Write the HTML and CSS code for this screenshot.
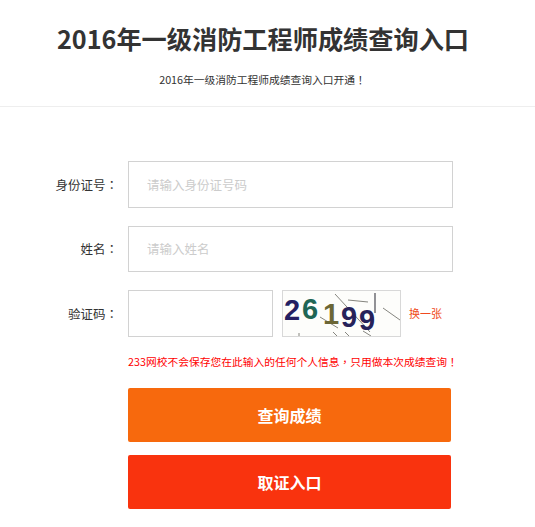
FILE: index.html
```html
<!DOCTYPE html>
<html lang="zh-CN">
<head>
<meta charset="utf-8">
<title>2016年一级消防工程师成绩查询入口</title>
<link rel="stylesheet" href="styles.css">
</head>
<body>
<header class="head">
  <h1 class="title">2016年一级消防工程师成绩查询入口</h1>
  <p class="sub">2016年一级消防工程师成绩查询入口开通<span class="punct" lang="zh-TW">！</span></p>
</header>
<form class="form">
  <div class="row">
    <label class="label">身份证号<span class="punct" lang="zh-TW">：</span></label>
    <input class="field" type="text" placeholder="请输入身份证号码">
  </div>
  <div class="row">
    <label class="label">姓名<span class="punct" lang="zh-TW">：</span></label>
    <input class="field" type="text" placeholder="请输入姓名">
  </div>
  <div class="row">
    <label class="label">验证码<span class="punct" lang="zh-TW">：</span></label>
    <input class="field short" type="text">
    <svg class="captcha" viewBox="0 0 117 45" aria-label="验证码图片">
      <rect width="117" height="45" fill="#fdfdfb"/>
      <g stroke="#85857f" stroke-width="1" fill="none">
        <path d="M52 3 L87 41"/><path d="M65 9 L85 11"/><path d="M100 17 L117 29"/>
        <path d="M37 26 L55 37"/><path d="M80 40 L88 45"/>
        <path d="M16 42 V45"/><path d="M50 41 L54 45"/><path d="M62 41 L66 45"/>
      </g>
      <path class="cline" d="M92 2 V22"/>
      <text class="cd" x="1" y="29" fill="#241f63">2</text>
      <text class="cd" x="19" y="28" fill="#1f6655">6</text>
      <text class="cd" x="40" y="33" fill="#6b6636">1</text>
      <text class="cd" x="58" y="36" fill="#26225a">9</text>
      <text class="cd" x="76" y="39" fill="#26225a">9</text>
    </svg>
    <a class="swap" href="#">换一张</a>
  </div>
  <p class="warn">233网校不会保存您在此输入的任何个人信息<span class="punct" lang="zh-TW">，</span>只用做本次成绩查询<span class="punct" lang="zh-TW">！</span></p>
  <button class="btn orange" type="button">查询成绩</button>
  <button class="btn red" type="button">取证入口</button>
</form>
</body>
</html>
```
FILE: styles.css
```css
* { box-sizing: border-box; }
html, body { margin: 0; padding: 0; background: #fff; }
body {
  font-family: "Noto Sans CJK SC", "Open Sans", sans-serif;
  color: #333;
  overflow: hidden;
}
.punct { font-family: "Noto Sans CJK TC", sans-serif; }
.head {
  height: 107px;
  border-bottom: 1px solid #eee;
  text-align: center;
  padding-top: 20px;
}
.title {
  margin: 0;
  font-size: 25.2px;
  line-height: 36px;
  font-weight: 700;
  padding-right: 9px;
}
.sub {
  margin: 16px 0 0;
  font-size: 10.75px;
  line-height: 16px;
  padding-right: 10px;
}
.form {
  padding: 54px 0 0 128px;
  display: flex;
  flex-direction: column;
}
.row {
  display: flex;
  align-items: center;
  height: 46.5px;
  margin-bottom: 18px;
}
.label {
  width: 118px;
  margin-left: -128px;
  margin-right: 10px;
  text-align: right;
  font-size: 12.5px;
  flex: none;
}
.field {
  width: 325px;
  height: 100%;
  border: 1px solid #d2d2d2;
  padding: 0 18px;
  font: 12.5px "Noto Sans CJK SC", sans-serif;
  color: #333;
  background: #fff;
  outline: none;
  flex: none;
}
.field::placeholder { color: #ccc; opacity: 1; }
.short { width: 145px; }
.captcha {
  width: 119px;
  height: 47px;
  margin-left: 9px;
  border: 1px solid #d8d8d8;
  flex: none;
}
.cd {
  font-family: "Liberation Sans", sans-serif;
  font-weight: 700;
  font-size: 29px;
}
.cline { stroke: #4a4a52; stroke-width: 1.2; fill: none; }
.swap {
  margin-left: 8px;
  font-size: 11px;
  color: #f04a20;
  text-decoration: none;
}
.warn {
  margin: -1px 0 0;
  height: 16px;
  font-size: 10.75px;
  line-height: 16px;
  color: #f00;
  white-space: nowrap;
}
.btn {
  width: 323px;
  height: 54px;
  border: 0;
  border-radius: 2px;
  color: #fff;
  font: 700 16px "Noto Sans CJK SC", sans-serif;
  padding: 0;
}
.orange { background: #f7690d; margin-top: 18px; }
.red { background: #f9330e; margin-top: 13px; }
```
